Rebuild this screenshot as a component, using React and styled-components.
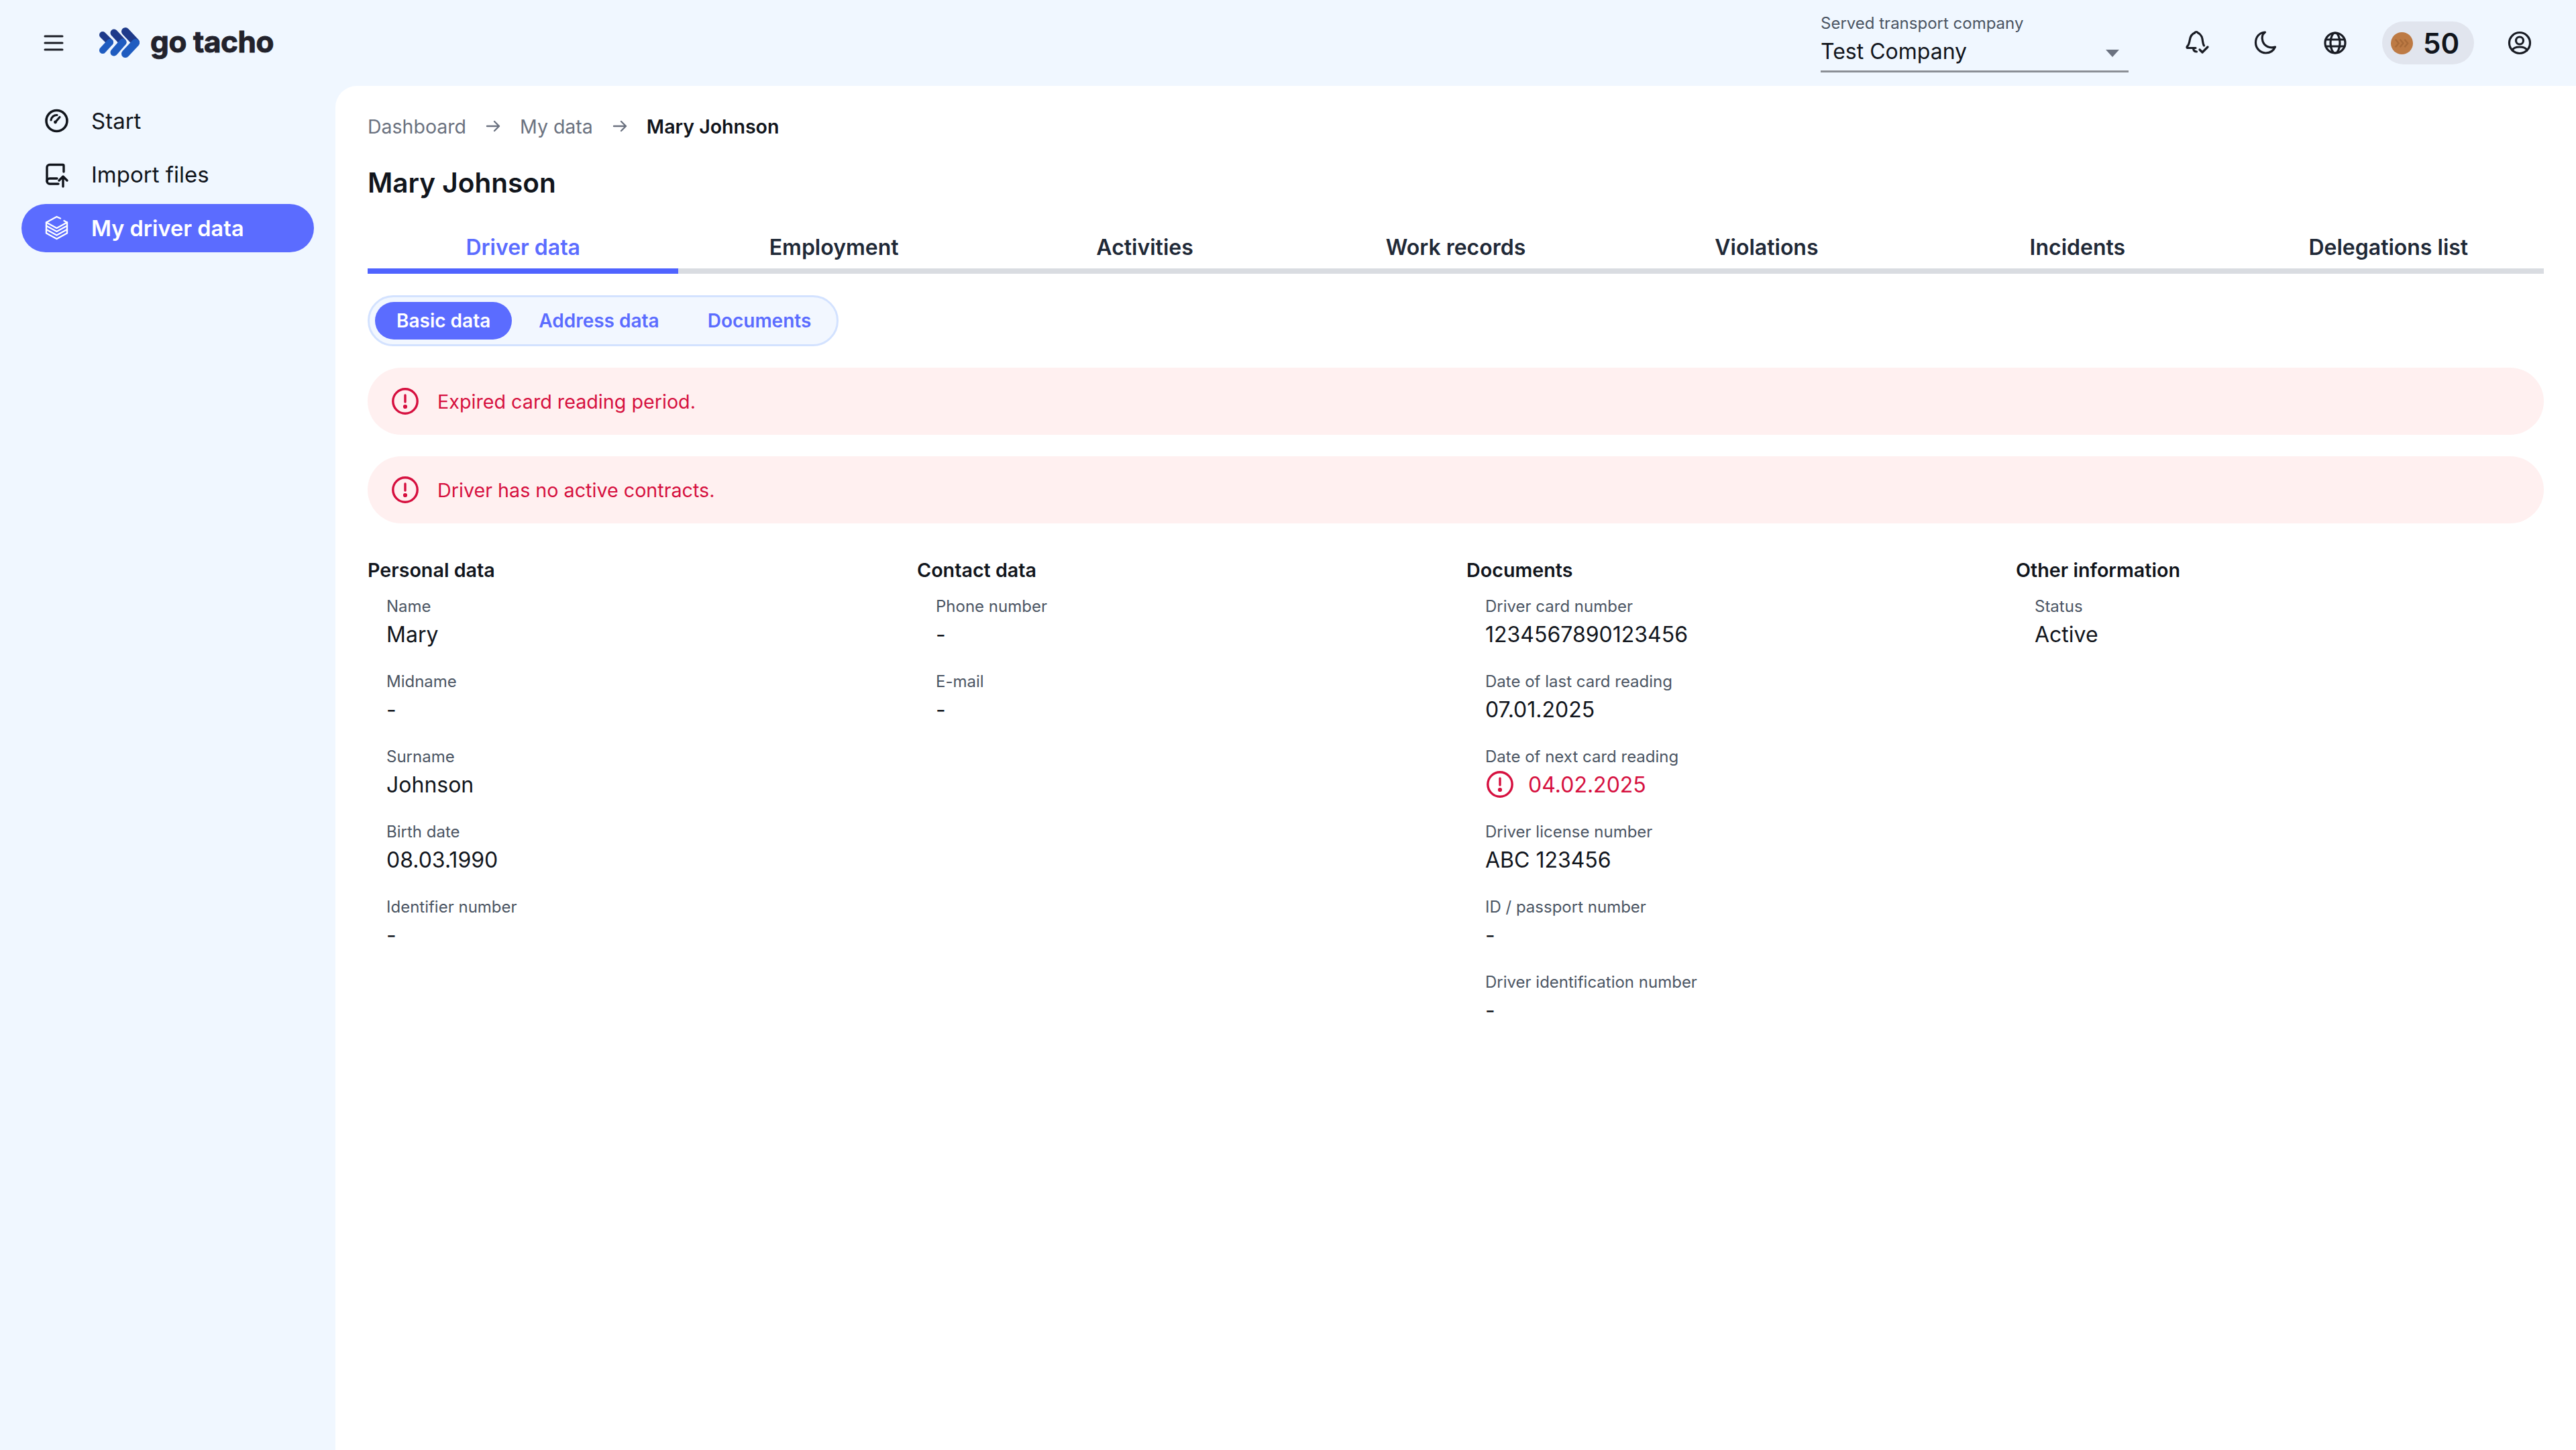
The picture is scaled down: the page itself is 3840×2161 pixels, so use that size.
import React from 'react'
import styled, { createGlobalStyle } from 'styled-components'

const GlobalStyle = createGlobalStyle`
  html, body { margin: 0; padding: 0; background: #f0f7ff; }
  body { font-family: Inter, "Liberation Sans", sans-serif; color: #11151c; }
  * { box-sizing: border-box; }
`

const Menu = () => (
  <svg width="30" height="24" viewBox="0 0 30 24" fill="none" stroke="#191c24" strokeWidth="3" strokeLinecap="round">
    <path d="M2 2h26M2 12h26M2 22h26" />
  </svg>
)

const LogoMark = () => (
  <svg width="60" height="46" viewBox="0 0 60 46" fill="none" strokeLinecap="round">
    <path d="M5 11l11 11" stroke="#1e3a8a" strokeWidth="10" />
    <path d="M16 22L5 34" stroke="#1f5cc0" strokeWidth="10" />
    <path d="M22 8l13 14" stroke="#1e3a8a" strokeWidth="11" />
    <path d="M35 22L22 37" stroke="#1f5cc0" strokeWidth="11" />
    <path d="M39 6l15 16" stroke="#1e3a8a" strokeWidth="12" />
    <path d="M54 23L39 39" stroke="#1f5cc0" strokeWidth="12" />
  </svg>
)

const GaugeIcon = () => (
  <svg width="40" height="40" viewBox="0 0 40 40" fill="none" stroke="currentColor" strokeWidth="3.6" strokeLinecap="round">
    <circle cx="19.500" cy="20" r="15.500" />
    <path d="M11 19a8.500 8.500 0 0 1 9-7.500" strokeWidth="3.200" />
    <path d="M18 21.500l6-7" strokeWidth="3.200" />
    <circle cx="17.500" cy="22" r="2.400" fill="currentColor" stroke="none" />
  </svg>
)

const ImportIcon = () => (
  <svg width="40" height="40" viewBox="0 0 40 40" fill="none" stroke="currentColor" strokeWidth="3.400" strokeLinecap="round" strokeLinejoin="round">
    <path d="M30 16V7a1.500 1.500 0 0 0-1.500-1.500H9A4 4 0 0 0 5 9.500V30a4 4 0 0 0 4 4h13" />
    <path d="M5 30a4 4 0 0 1 4-4h11" />
    <path d="M29 38V23M23 29l6-6 6 6" />
  </svg>
)

const LayersIcon = () => (
  <svg width="40" height="40" viewBox="0 0 40 40" fill="none" stroke="currentColor" strokeWidth="2.400" strokeLinecap="round" strokeLinejoin="round">
    <path d="M25 5.500L19.500 3 4 11.500l15.500 8.500L35 11.500l-4.500-2.500" />
    <path d="M4 11.500v5L19.500 25 35 16.500v-5" />
    <path d="M4 16.500v5.500L19.500 30.500 35 22v-5.500" />
    <path d="M4 22v5.500L19.500 36 35 27.500V22" />
  </svg>
)

const BellIcon = () => (
  <svg width="40" height="40" viewBox="0 0 40 40" fill="none" stroke="#191c24" strokeWidth="3.200" strokeLinecap="round" strokeLinejoin="round">
    <path d="M16.500 5c1.500-2 3.500-2 5 0 0 0 5.500 2.500 6.500 9 .7 4.500 1 8 2.500 10" />
    <path d="M16.500 5C13 6.500 10.500 9 9.500 14.500c-.8 4.500-1.500 8-3.500 10-1.500 1.500-1.500 3 .5 3H18" />
    <path d="M14.500 28c.3 3.500 2.500 5 5 5" />
    <path d="M24 30l4 4 8-8" />
  </svg>
)

const MoonIcon = () => (
  <svg width="40" height="40" viewBox="0 0 40 40" fill="none" stroke="#191c24" strokeWidth="3.200" strokeLinecap="round" strokeLinejoin="round">
    <path d="M5.500 19.500c0 8.400 6.800 15.500 15 15.500 6.500 0 11.500-3.500 14-9-8 2.500-16-1-18.500-8.500C14 11.500 15.500 7 19.500 4 11 4.500 5.500 11 5.500 19.500z" />
  </svg>
)

const GlobeIcon = () => (
  <svg width="40" height="40" viewBox="0 0 40 40" fill="none" stroke="#191c24" strokeWidth="3.200" strokeLinecap="round">
    <circle cx="20" cy="20" r="15" />
    <ellipse cx="20" cy="20" rx="7" ry="15" />
    <path d="M6 15h28M6 25h28" />
  </svg>
)

const UserIcon = () => (
  <svg width="40" height="40" viewBox="0 0 40 40" fill="none" stroke="#191c24" strokeWidth="3.200" strokeLinecap="round">
    <circle cx="20" cy="20" r="15.500" />
    <circle cx="20" cy="16.500" r="5.500" />
    <path d="M9 31c1.500-3.500 5.500-5 11-5s9.500 1.500 11 5" />
  </svg>
)

const AlertIcon = () => (
  <svg width="40" height="40" viewBox="0 0 40 40" fill="none" stroke="#d6103f" strokeWidth="3.400" strokeLinecap="round">
    <circle cx="20" cy="20" r="18.200" />
    <path d="M20 11v10" />
    <circle cx="20" cy="28" r="1.400" fill="#d6103f" />
  </svg>
)

const Coin = () => (
  <svg width="33" height="33" viewBox="0 0 34 34" fill="none">
    <circle cx="17" cy="17" r="17" fill="#bd7a44" />
    <path d="M7 11l5 6-5 6M14 11l5 6-5 6M21 11l5 6-5 6" stroke="#a86a38" strokeWidth="2.500" />
  </svg>
)

const ArrowIcon = () => (
  <svg width="22" height="20" viewBox="0 0 22 20" fill="none" stroke="#6b7280" strokeWidth="2.400" strokeLinecap="round" strokeLinejoin="round">
    <path d="M2 10h18M13 3l7 7-7 7" />
  </svg>
)

const Page = styled.div`
  display: grid;
  grid-template-columns: 500px 1fr;
  grid-template-rows: 128px 1fr;
  width: 100%;
  min-height: 2161px;
  background: #f0f7ff;
`

const Header = styled.header`
  grid-column: 1 / 3;
  display: flex;
  align-items: center;
  padding: 0 52px 0 65px;
`

const MenuButton = styled.div`
  display: flex;
  margin-right: 53px;
`

const Logo = styled.div`
  display: flex;
  align-items: center;
  gap: 16px;
`

const LogoText = styled.span`
  font-family: Inter, sans-serif;
  font-weight: 700;
  font-size: 44px;
  line-height: 1;
  letter-spacing: -0.4px;
  color: #22222c;
  -webkit-text-stroke: 1px #22222c;
  margin-top: -4px;
`

const HeaderRight = styled.div`
  margin-left: auto;
  display: flex;
  align-items: center;
  gap: 38px;
`

const CompanySelect = styled.div`
  position: relative;
  width: 459px;
  height: 92px;
  margin-top: -4px;
  margin-right: 32px;
  padding-top: 2px;
  border-bottom: 3px solid #8b8f96;
`

const SelectLabel = styled.div`
  font-size: 24px;
  line-height: 34px;
  color: #4b5563;
`

const SelectValue = styled.div`
  font-size: 32px;
  line-height: 49px;
  color: #11151c;
`

const Caret = styled.span`
  position: absolute;
  right: 14px;
  bottom: 20px;
  width: 0;
  height: 0;
  border-left: 10px solid transparent;
  border-right: 10px solid transparent;
  border-top: 11px solid #6b7280;
`

const IconButton = styled.div`
  display: flex;
  align-items: center;
  justify-content: center;
  width: 64px;
  height: 64px;
  margin-left: ${p => p.$shift || 0}px;
`

const CoinPill = styled.div`
  display: flex;
  align-items: center;
  gap: 15px;
  height: 64px;
  width: 137px;
  padding-left: 13px;
  border-radius: 32px;
  background: #e1e5ee;
  font-size: 42px;
  font-weight: 600;
  color: #11151c;
`

const Sidebar = styled.nav`
  display: flex;
  flex-direction: column;
  gap: 8px;
  padding: 16px 32px;
`

const NavItem = styled.div`
  display: flex;
  align-items: center;
  gap: 31px;
  height: 72px;
  padding-left: 33px;
  border-radius: 36px;
  font-size: ${p => (p.$active ? 32.5 : 33)}px;
  font-weight: ${p => (p.$active ? 600 : 400)};
  color: ${p => (p.$active ? '#fff' : '#11151c')};
  background: ${p => (p.$active ? '#5b6cff' : 'transparent')};
`

const Main = styled.main`
  background: #fff;
  border-top-left-radius: 32px;
  padding: 40px 48px 48px;
`

const Breadcrumb = styled.div`
  display: flex;
  align-items: center;
  height: 40px;
  font-size: 28.500px;
  color: #6b7280;
`

const Crumb = styled.span`
  font-weight: ${p => (p.$current ? 600 : 400)};
  color: ${p => (p.$current ? '#11151c' : '#6b7280')};
`

const CrumbArrow = styled.span`
  display: flex;
  margin: 0 29px;
`

const Title = styled.h1`
  margin: 40px 0 0;
  font-size: 40.500px;
  line-height: 50px;
  font-weight: 600;
  color: #11151c;
`

const Tabs = styled.div`
  display: grid;
  grid-template-columns: repeat(7, 1fr);
  margin-top: 38px;
`

const Tab = styled.div`
  display: flex;
  align-items: center;
  justify-content: center;
  height: 72px;
  border-bottom: 8px solid ${p => (p.$active ? '#4f63ff' : '#d9dce1')};
  font-size: 32px;
  font-weight: 600;
  color: ${p => (p.$active ? '#5b6cff' : '#1f2937')};
`

const SubTabs = styled.div`
  display: inline-flex;
  align-items: center;
  gap: 8px;
  height: 76px;
  margin-top: 32px;
  padding: 0 6px 0 8px;
  border: 3px solid #d3e2ff;
  border-radius: 38px;
  background: #f2f7ff;
  vertical-align: top;
`

const SubTab = styled.div`
  display: flex;
  align-items: center;
  height: 56px;
  padding: 0 32px;
  border-radius: 28px;
  font-size: 28px;
  font-weight: 600;
  color: ${p => (p.$active ? '#fff' : '#5b6cff')};
  background: ${p => (p.$active ? '#5b6cff' : 'transparent')};
`

const Alerts = styled.div`
  display: flex;
  flex-direction: column;
  gap: 32px;
  margin-top: 32px;
`

const AlertBox = styled.div`
  display: flex;
  align-items: center;
  gap: 28px;
  height: 100px;
  padding-left: 36px;
  border-radius: 50px;
  background: #fff0f0;
  font-size: 28.700px;
  color: #d6103f;
`

const Columns = styled.div`
  display: grid;
  grid-template-columns: repeat(4, 1fr);
  gap: 32px;
  margin-top: 50px;
`

const ColumnTitle = styled.h2`
  margin: 0 0 17px;
  font-size: 28.700px;
  line-height: 40px;
  font-weight: 600;
  color: #11151c;
`

const Fields = styled.div`
  display: flex;
  flex-direction: column;
  gap: 32px;
  padding-left: 28px;
`

const Label = styled.div`
  font-size: 24px;
  line-height: 33px;
  color: #4b5563;
`

const Value = styled.div`
  display: flex;
  align-items: center;
  gap: 22px;
  height: 44px;
  margin-top: 3px;
  font-size: 32px;
  color: ${p => (p.$error ? '#d6103f' : '#11151c')};
  svg { margin-left: 2px; }
`

const tabs = ['Driver data', 'Employment', 'Activities', 'Work records', 'Violations', 'Incidents', 'Delegations list']

const columns = [
  {
    title: 'Personal data',
    fields: [
      ['Name', 'Mary'],
      ['Midname', '-'],
      ['Surname', 'Johnson'],
      ['Birth date', '08.03.1990'],
      ['Identifier number', '-'],
    ],
  },
  {
    title: 'Contact data',
    fields: [
      ['Phone number', '-'],
      ['E-mail', '-'],
    ],
  },
  {
    title: 'Documents',
    fields: [
      ['Driver card number', '1234567890123456'],
      ['Date of last card reading', '07.01.2025'],
      ['Date of next card reading', '04.02.2025', true],
      ['Driver license number', 'ABC 123456'],
      ['ID / passport number', '-'],
      ['Driver identification number', '-'],
    ],
  },
  {
    title: 'Other information',
    fields: [['Status', 'Active']],
  },
]

export default function App() {
  return (
    <Page>
      <GlobalStyle />
      <Header>
        <MenuButton><Menu /></MenuButton>
        <Logo>
          <LogoMark />
          <LogoText>go tacho</LogoText>
        </Logo>
        <HeaderRight>
          <CompanySelect>
            <SelectLabel>Served transport company</SelectLabel>
            <SelectValue>Test Company</SelectValue>
            <Caret />
          </CompanySelect>
          <IconButton><BellIcon /></IconButton>
          <IconButton><MoonIcon /></IconButton>
          <IconButton $shift={2}><GlobeIcon /></IconButton>
          <CoinPill><Coin />50</CoinPill>
          <IconButton $shift={-2}><UserIcon /></IconButton>
        </HeaderRight>
      </Header>
      <Sidebar>
        <NavItem><GaugeIcon />Start</NavItem>
        <NavItem><ImportIcon />Import files</NavItem>
        <NavItem $active><LayersIcon />My driver data</NavItem>
      </Sidebar>
      <Main>
        <Breadcrumb>
          <Crumb>Dashboard</Crumb>
          <CrumbArrow><ArrowIcon /></CrumbArrow>
          <Crumb>My data</Crumb>
          <CrumbArrow><ArrowIcon /></CrumbArrow>
          <Crumb $current>Mary Johnson</Crumb>
        </Breadcrumb>
        <Title>Mary Johnson</Title>
        <Tabs>
          {tabs.map((t, i) => (
            <Tab key={t} $active={i === 0}>{t}</Tab>
          ))}
        </Tabs>
        <SubTabs>
          <SubTab $active>Basic data</SubTab>
          <SubTab>Address data</SubTab>
          <SubTab>Documents</SubTab>
        </SubTabs>
        <Alerts>
          <AlertBox><AlertIcon />Expired card reading period.</AlertBox>
          <AlertBox><AlertIcon />Driver has no active contracts.</AlertBox>
        </Alerts>
        <Columns>
          {columns.map(col => (
            <div key={col.title}>
              <ColumnTitle>{col.title}</ColumnTitle>
              <Fields>
                {col.fields.map(([label, value, error]) => (
                  <div key={label}>
                    <Label>{label}</Label>
                    <Value $error={error}>
                      {error && <AlertIcon />}
                      {value}
                    </Value>
                  </div>
                ))}
              </Fields>
            </div>
          ))}
        </Columns>
      </Main>
    </Page>
  )
}
